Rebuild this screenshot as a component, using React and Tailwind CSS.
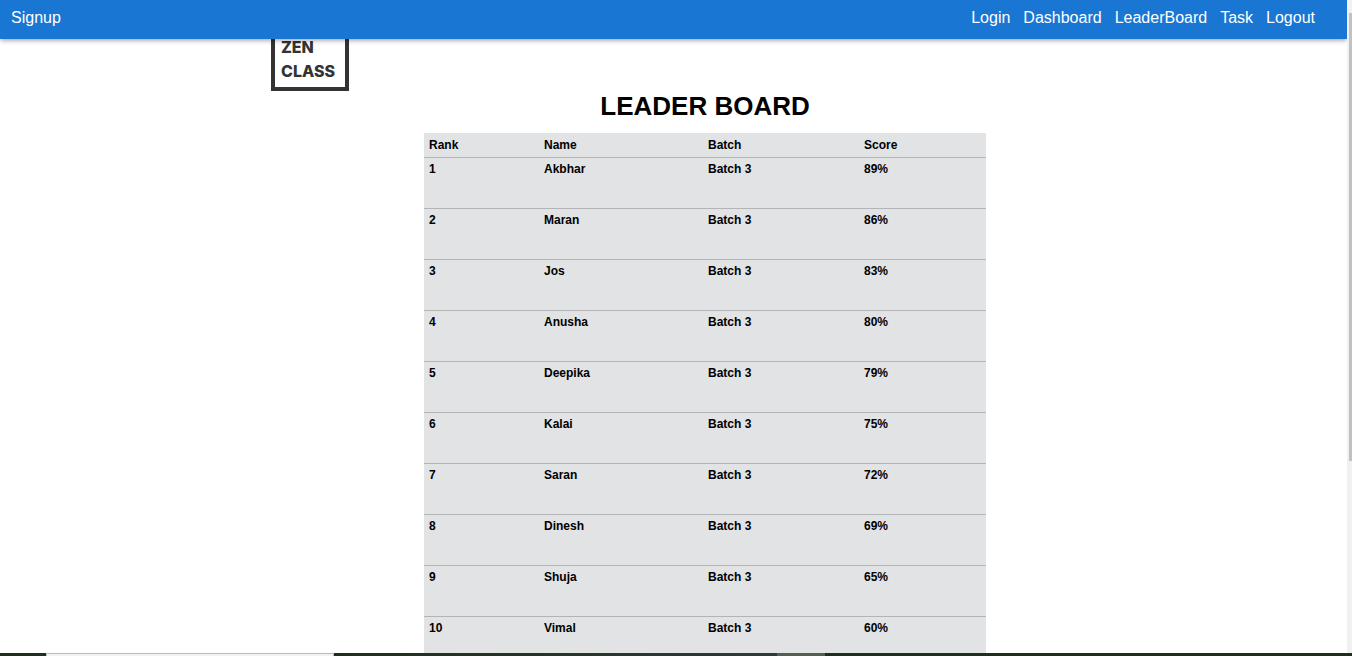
const navLinks = ["Login", "Dashboard", "LeaderBoard", "Task", "Logout"];

const students = [
  { name: "Akbhar", score: 89 },
  { name: "Maran", score: 86 },
  { name: "Jos", score: 83 },
  { name: "Anusha", score: 80 },
  { name: "Deepika", score: 79 },
  { name: "Kalai", score: 75 },
  { name: "Saran", score: 72 },
  { name: "Dinesh", score: 69 },
  { name: "Shuja", score: 65 },
  { name: "Vimal", score: 60 },
];

function NavBar() {
  return (
    <nav className="relative z-10 flex h-[39px] shrink-0 items-center justify-between bg-[#1976d2] pr-8 pb-1 pl-[11px] text-base text-white shadow-[0_2px_4px_-1px_rgba(0,0,0,0.2),0_2px_5px_0_rgba(0,0,0,0.2)]">
      <a href="#signup">Signup</a>
      <div className="flex gap-[13px]">
        {navLinks.map((label) => (
          <a key={label} href={`#${label.toLowerCase()}`}>
            {label}
          </a>
        ))}
      </div>
    </nav>
  );
}

function Logo() {
  return (
    <div className="flex h-[52px] w-[78px] flex-col justify-end gap-2 border-4 border-t-0 border-[#333333] pb-2 pl-[6px] font-['Inter',sans-serif] text-base leading-4 font-extrabold text-[#333333]">
      <span>ZEN</span>
      <span>CLASS</span>
    </div>
  );
}

function LeaderTable() {
  return (
    <table className="mx-auto w-[562px] table-fixed border-collapse bg-[#e1e3e5] text-left text-xs font-bold">
      <colgroup>
        <col className="w-[115px]" />
        <col className="w-[164px]" />
        <col className="w-[156px]" />
        <col />
      </colgroup>
      <thead>
        <tr className="h-6 border-b border-[#b2b4b6]">
          <th className="px-[5px]">Rank</th>
          <th className="px-[5px]">Name</th>
          <th className="px-[5px]">Batch</th>
          <th className="px-[5px]">Score</th>
        </tr>
      </thead>
      <tbody>
        {students.map((student, i) => (
          <tr key={student.name} className="h-[51px] border-b border-[#b2b4b6] align-top">
            <td className="px-[5px] pt-[3px]">{i + 1}</td>
            <td className="px-[5px] pt-[3px]">{student.name}</td>
            <td className="px-[5px] pt-[3px]">Batch 3</td>
            <td className="px-[5px] pt-[3px]">{student.score}%</td>
          </tr>
        ))}
      </tbody>
    </table>
  );
}

export default function App() {
  return (
    <div className="flex h-screen flex-col overflow-hidden bg-white font-['Liberation_Sans',Arial,sans-serif] text-black">
      <div className="flex min-h-0 flex-1">
        <div className="flex min-w-0 flex-1 flex-col overflow-hidden">
          <NavBar />
          <main className="min-h-0 flex-1 overflow-hidden pl-[63px]">
            <div className="mx-auto max-w-[868px]">
              <Logo />
              <h1 className="mb-3 text-center text-[26px] leading-[30px] font-bold">LEADER BOARD</h1>
              <LeaderTable />
            </div>
          </main>
        </div>
        <div className="flex w-[5px] shrink-0 flex-col items-end bg-[#f1f1f1] pt-[13px]">
          <div className="h-[70%] w-[3px] bg-[#c1c1c1]" />
        </div>
      </div>
      <div className="flex h-[3px] shrink-0 bg-[#1f2f1f]">
        <div className="w-[46px]" />
        <div className="w-[288px] border border-b-0 border-[#bcbcbc] bg-[#f2f2f2]" />
        <div className="w-[443px] bg-linear-to-r from-[#1f2f1f] to-[#2e3b35]" />
        <div className="w-12 bg-[#535f53]" />
      </div>
    </div>
  );
}
